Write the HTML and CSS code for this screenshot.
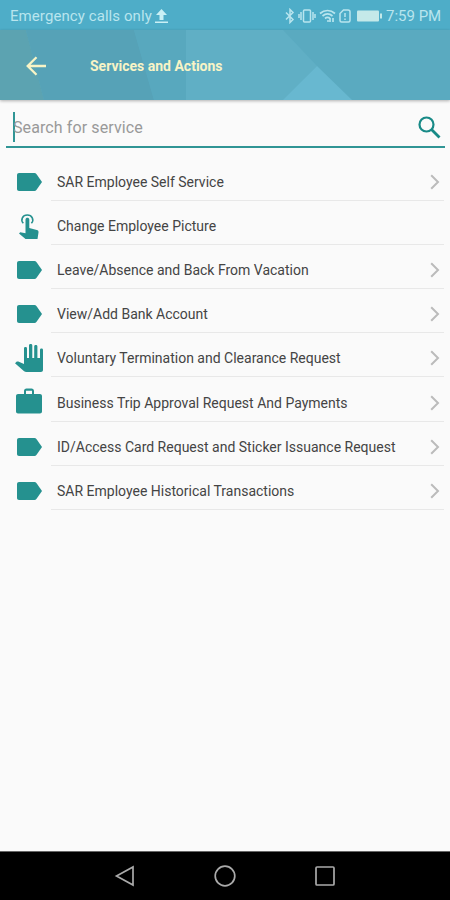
FILE: index.html
```
<!DOCTYPE html>
<html lang="en">
<head>
    <meta charset="UTF-8">
    <meta name="viewport" content="width=device-width, initial-scale=1.0">
    <title>Services and Actions</title>
    <link rel="stylesheet" href="styles.css">
</head>
<body>
    <!-- Shared icons -->
    <svg class="sprite">
        <symbol id="label" viewBox="0 0 25 18">
            <path d="M2 0h15.500c.8 0 1.400.3 1.900 1L25 9l-5.600 8c-.5.7-1.100 1-1.900 1H2c-1.100 0-2-.9-2-2V2C0 .9.9 0 2 0z"/>
        </symbol>
        <symbol id="chevron" viewBox="0 0 10 16">
            <path d="M1.200 1.200L8 8l-6.800 6.800" fill="none" stroke="currentColor" stroke-width="2"/>
        </symbol>
    </svg>

    <div class="status-bar">
        <span class="carrier">Emergency calls only</span>
        <svg class="upload" width="13" height="16" viewBox="0 0 13 16"><path d="M6.500 1L12 7H8.500v5h-4V7H1zM0 13.500h13V15H0z"/></svg>
        <div class="status-icons">
            <svg width="10" height="16" viewBox="0 0 10 16" fill="none" stroke="currentColor" stroke-width="1.500"><path d="M1 4.500l7 7L5 14.500v-13l3 3-7 7"/></svg>
            <svg width="18" height="16" viewBox="0 0 18 16" fill="none" stroke="currentColor" stroke-width="1.500"><rect x="5.500" y="2" width="7" height="12" rx="1"/><path d="M3 4v8M15 4v8M1 6v4M17 6v4"/></svg>
            <svg width="17" height="16" viewBox="0 0 17 16" fill="none" stroke="currentColor" stroke-width="1.700"><path d="M1 5.500c4.500-4 10.500-4 15 0M3.500 8c3-2.500 7-2.500 10 0M6 10.500c1.500-1.300 3.500-1.300 5 0M8 13h2M11 10v4M14 10v4"/></svg>
            <svg width="12" height="16" viewBox="0 0 12 16" fill="none" stroke="currentColor" stroke-width="1.500"><path d="M4.500 2H9c1 0 2 1 2 2v8.500c0 .8-.7 1.500-1.500 1.500h-7c-.8 0-1.500-.7-1.500-1.500v-7zM6 5v4M6 10.500V12"/></svg>
            <svg class="battery" width="26" height="16" viewBox="0 0 26 16"><rect x="0" y="2.500" width="22" height="11" rx="1"/><path d="M23 5.500h2v5h-2z"/></svg>
        </div>
        <span class="clock">7:59 PM</span>
    </div>

    <header class="toolbar">
        <svg class="toolbar-bg" width="450" height="70" viewBox="0 0 450 70">
            <path fill="#5ca3b1" d="M0 0h26l18 70H0z"/>
            <path fill="#56a2b7" d="M26 0h108l20 70H44z"/>
            <path fill="#58a8be" d="M134 0h52v70h-32z"/>
            <path fill="#60afc5" d="M186 0h97l34 36-33 34h-98z"/>
            <path fill="#68b8d0" d="M317 36l35 34h-69z"/>
        </svg>
        <svg class="back" width="20" height="20" viewBox="0 0 20 20"><path d="M20 10H2M10.500 1.200L1.700 10l8.800 8.800" fill="none" stroke="#f8f4c6" stroke-width="2.300"/></svg>
        <h1>Services and Actions</h1>
    </header>

    <div class="search">
        <span class="caret"></span>
        <span class="placeholder">Search for service</span>
        <svg class="search-icon" width="23" height="23" viewBox="0 0 23 23" fill="none" stroke="currentColor"><circle cx="8.500" cy="8.500" r="7" stroke-width="2.200"/><path d="M13.500 13.500l8 8" stroke-width="2.800"/></svg>
    </div>

    <ul class="services">
        <li>
            <div class="icon"><svg width="25" height="18"><use href="#label"/></svg></div>
            <div class="row"><span class="name">SAR Employee Self Service</span><svg class="chevron"><use href="#chevron"/></svg></div>
        </li>
        <li>
            <div class="icon"><svg width="20" height="25" viewBox="0 0 20 25"><path d="M6.500 5.500c0-2.300 3.800-2.300 3.800 0V14l7.500 2c1.200.3 1.900 1.200 1.700 2.500L18.500 25H6.500L0 19.500l1.200-1.300 5.300 1.100z"/><path d="M4.300 9.200C1.200 5.800 3.600 1 8.300 1s7.200 4.800 4.100 8.200" fill="none" stroke="currentColor" stroke-width="1.600"/></svg></div>
            <div class="row"><span class="name">Change Employee Picture</span></div>
        </li>
        <li>
            <div class="icon"><svg width="25" height="18"><use href="#label"/></svg></div>
            <div class="row"><span class="name">Leave/Absence and Back From Vacation</span><svg class="chevron"><use href="#chevron"/></svg></div>
        </li>
        <li>
            <div class="icon"><svg width="25" height="18"><use href="#label"/></svg></div>
            <div class="row"><span class="name">View/Add Bank Account</span><svg class="chevron"><use href="#chevron"/></svg></div>
        </li>
        <li>
            <div class="icon"><svg width="28" height="28" viewBox="0 0 28 28"><path d="M28 6v20c0 1.100-.9 2-2 2H11.500c-1 0-2-.4-2.700-1.100L0 19.200l1.300-1.300c.5-.5 1.300-.6 2-.3L9 20V4.500C9 2.600 12 2.600 12 4.500V14h2V1.500C14 -.4 17.300-.4 17.300 1.500V14h1.900V2.500c0-1.900 3.200-1.900 3.200 0V14H25V6c0-1.900 3-1.900 3 0z"/></svg></div>
            <div class="row"><span class="name">Voluntary Termination and Clearance Request</span><svg class="chevron"><use href="#chevron"/></svg></div>
        </li>
        <li>
            <div class="icon"><svg class="briefcase" width="26" height="26" viewBox="0 0 26 26"><path fill-rule="evenodd" d="M8 6V3c0-1.500 1-2.500 2.500-2.500h5C17 .5 18 1.500 18 3v3h6c1.100 0 2 .9 2 2v15.500c0 1.100-.9 2-2 2H2c-1.100 0-2-.9-2-2V8c0-1.100.9-2 2-2zm2 0h6V2.700h-6z"/></svg></div>
            <div class="row"><span class="name">Business Trip Approval Request And Payments</span><svg class="chevron"><use href="#chevron"/></svg></div>
        </li>
        <li>
            <div class="icon"><svg width="25" height="18"><use href="#label"/></svg></div>
            <div class="row"><span class="name">ID/Access Card Request and Sticker Issuance Request</span><svg class="chevron"><use href="#chevron"/></svg></div>
        </li>
        <li>
            <div class="icon"><svg width="25" height="18"><use href="#label"/></svg></div>
            <div class="row"><span class="name">SAR Employee Historical Transactions</span><svg class="chevron"><use href="#chevron"/></svg></div>
        </li>
    </ul>

    <nav class="nav-bar">
        <svg width="24" height="24" viewBox="0 0 24 24"><path d="M20 3v18L3.500 12z"/></svg>
        <svg width="24" height="24" viewBox="0 0 24 24"><circle cx="12" cy="12" r="9.800"/></svg>
        <svg width="24" height="24" viewBox="0 0 24 24"><rect x="3" y="3" width="18" height="18" rx="1"/></svg>
    </nav>
</body>
</html>
```
FILE: styles.css
```
* {
    box-sizing: border-box;
}
body {
    margin: 0;
    height: 900px;
    display: flex;
    flex-direction: column;
    background-color: #fafafa;
    font-family: Roboto, "Liberation Sans", sans-serif;
    overflow: hidden;
}
svg {
    display: block;
    flex-shrink: 0;
}
.sprite {
    position: absolute;
    width: 0;
    height: 0;
}
.status-bar {
    height: 30px;
    padding: 2px 9px 0 10px;
    display: flex;
    align-items: center;
    background-color: #4eadc8;
    color: #b9e5ee;
    font-size: 15px;
    white-space: nowrap;
}
.upload {
    margin-left: 3px;
    fill: #c9f0f5;
}
.carrier {
    width: 142px;
    letter-spacing: 0.08px;
}
.status-icons {
    display: flex;
    gap: 3px;
    margin-left: auto;
    margin-right: 3px;
}
.battery {
    margin-left: 3px;
    fill: #c4e9e9;
}
.clock {
    width: 55px;
}
.toolbar {
    position: relative;
    z-index: 1;
    height: 70px;
    padding: 1px 0 0 26px;
    display: flex;
    align-items: center;
    background-color: #5aaac0;
    box-shadow: 0 1px 3px rgba(0,0,0,0.3);
}
.toolbar-bg {
    position: absolute;
    top: 0;
    left: 0;
}
.back {
    position: relative;
}
h1 {
    position: relative;
    margin: 0 0 0 44px;
    color: #f8f4c6;
    font-size: 14px;
    font-weight: 700;
}
.search {
    height: 48px;
    margin: 0 5px 0 6px;
    padding: 8px 4px 0 7px;
    display: flex;
    align-items: center;
    border-bottom: 2px solid #309595;
    color: #188a87;
}
.caret {
    width: 2px;
    height: 30px;
    background-color: #309595;
}
.placeholder {
    margin-left: -2px;
    padding-top: 1px;
    color: #999;
    font-size: 16px;
    letter-spacing: 0.1px;
}
.search-icon {
    margin-left: auto;
}
.services {
    list-style: none;
    margin: 9px 0 0;
    padding: 0;
    flex: 1;
}
.services li {
    height: 44.1px;
    display: flex;
}
.icon {
    width: 51px;
    padding: 6px 0 0 7px;
    display: flex;
    align-items: center;
    justify-content: center;
    color: #25918f;
    fill: #25918f;
}
.briefcase {
    margin-bottom: 3px;
}
.row {
    flex: 1;
    margin-right: 6px;
    padding: 7px 4px 0 6px;
    display: flex;
    align-items: center;
    justify-content: space-between;
    border-bottom: 1px solid #e8e8e8;
}
.name {
    color: #444;
    font-size: 14px;
    white-space: nowrap;
}
.chevron {
    width: 10px;
    height: 16px;
    color: #bbb;
}
.nav-bar {
    height: 49px;
    padding: 0 113px;
    display: flex;
    align-items: center;
    justify-content: space-between;
    background-color: #000;
    border-top: 1px solid #666;
    fill: none;
    stroke: #aaa;
    stroke-width: 1.7;
}
```
